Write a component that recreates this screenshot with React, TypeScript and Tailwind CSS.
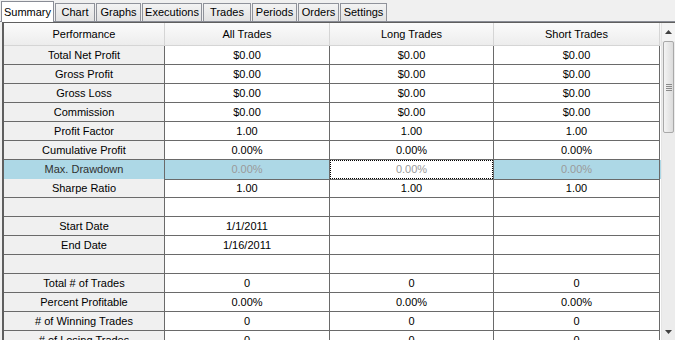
import React from "react";

const tabs = [
  { name: "Summary", w: 53 },
  { name: "Chart", w: 40 },
  { name: "Graphs", w: 45 },
  { name: "Executions", w: 60 },
  { name: "Trades", w: 48 },
  { name: "Periods", w: 45 },
  { name: "Orders", w: 41 },
  { name: "Settings", w: 47 },
];

const rows: string[][] = [
  ["Total Net Profit", "$0.00", "$0.00", "$0.00"],
  ["Gross Profit", "$0.00", "$0.00", "$0.00"],
  ["Gross Loss", "$0.00", "$0.00", "$0.00"],
  ["Commission", "$0.00", "$0.00", "$0.00"],
  ["Profit Factor", "1.00", "1.00", "1.00"],
  ["Cumulative Profit", "0.00%", "0.00%", "0.00%"],
  ["Max. Drawdown", "0.00%", "0.00%", "0.00%"],
  ["Sharpe Ratio", "1.00", "1.00", "1.00"],
  ["", "", "", ""],
  ["Start Date", "1/1/2011", "", ""],
  ["End Date", "1/16/2011", "", ""],
  ["", "", "", ""],
  ["Total # of Trades", "0", "0", "0"],
  ["Percent Profitable", "0.00%", "0.00%", "0.00%"],
  ["# of Winning Trades", "0", "0", "0"],
  ["# of Losing Trades", "0", "0", "0"],
];

const SELECTED = 6;

const Scrollbar = () => (
  <div className="w-[14px] h-full shrink-0 flex flex-col bg-[#ececec] border-l border-[#e4e4e4]">
    <div className="h-[18px] shrink-0 flex items-center justify-center bg-[#f4f4f4]">
      <svg width="7" height="4" viewBox="0 0 7 4">
        <path d="M0 4 L3.5 0 L7 4 Z" fill="#404040" />
      </svg>
    </div>
    <div className="h-[92px] shrink-0 mx-[1px] rounded-[2px] border border-[#a9a9a9] bg-gradient-to-r from-[#f4f4f4] to-[#dcdcdc] flex items-center justify-center">
      <div className="flex flex-col gap-[1px]">
        <div className="w-[6px] h-[1px] bg-[#8a8a8a]" />
        <div className="w-[6px] h-[1px] bg-[#8a8a8a]" />
        <div className="w-[6px] h-[1px] bg-[#8a8a8a]" />
        <div className="w-[6px] h-[1px] bg-[#8a8a8a]" />
      </div>
    </div>
    <div className="flex-1" />
    <div className="h-[16px] shrink-0 flex items-center justify-center">
      <svg width="7" height="4" viewBox="0 0 7 4">
        <path d="M0 0 L3.5 4 L7 0 Z" fill="#404040" />
      </svg>
    </div>
  </div>
);

export default function App() {
  return (
    <div
      className="w-[675px] h-[340px] overflow-hidden bg-[#f0f0f0] text-[11px] text-black"
      style={{ fontFamily: '"Liberation Sans", Arial, sans-serif' }}
    >
      <div className="h-[21px] flex items-end pl-[1px]">
        {tabs.map((t, i) =>
          i === 0 ? (
            <div
              key={t.name}
              style={{ width: t.w }}
              className="h-[21px] -mb-[1px] relative z-10 bg-white border border-b-0 border-[#898c95] flex items-center justify-center leading-none"
            >
              {t.name}
            </div>
          ) : (
            <div
              key={t.name}
              style={{ width: t.w }}
              className="h-[18px] ml-[1px] bg-gradient-to-b from-[#f3f3f3] to-[#e2e2e2] border border-b-0 border-[#8f929a] flex items-center justify-center leading-none"
            >
              {t.name}
            </div>
          )
        )}
      </div>
      <div className="border-t border-[#898c95] h-[319px] pl-[2px] flex">
        <div className="flex-1 h-full border-l-2 border-t border-[#5f5f5f] bg-white flex overflow-hidden">
          <div className="flex-1 flex flex-col">
            <div className="grid shrink-0 grid-cols-[161px_165px_164px_166px] h-[23px] bg-gradient-to-b from-[#fbfbfb] to-[#ececec]">
              {["Performance", "All Trades", "Long Trades", "Short Trades"].map((h) => (
                <div
                  key={h}
                  className="border-r border-b border-[#d5d5d5] flex items-center justify-center pt-[1px]"
                >
                  {h}
                </div>
              ))}
            </div>
            {rows.map((r, ri) => (
              <div
                key={ri}
                className={`grid shrink-0 grid-cols-[161px_165px_164px_166px] h-[19px] ${
                  ri === SELECTED ? "bg-[#add8e6]" : ""
                }`}
              >
                {r.map((c, ci) => {
                  const sel = ri === SELECTED;
                  const focus = sel && ci === 2;
                  return (
                    <div
                      key={ci}
                      className={`border-r border-b border-[#6a6a6a] flex items-center justify-center ${
                        ci === 0 ? (sel ? "bg-[#add8e6] text-[#303030]" : "bg-[#f0f0f0]") : ""
                      } ${sel && ci > 0 ? "text-[#9a9a9a]" : ""} ${focus ? "bg-white" : ""}`}
                    >
                      {focus ? (
                        <div className="w-full h-full border border-dotted border-black flex items-center justify-center">
                          {c}
                        </div>
                      ) : (
                        c
                      )}
                    </div>
                  );
                })}
              </div>
            ))}
          </div>
          <Scrollbar />
        </div>
      </div>
    </div>
  );
}
